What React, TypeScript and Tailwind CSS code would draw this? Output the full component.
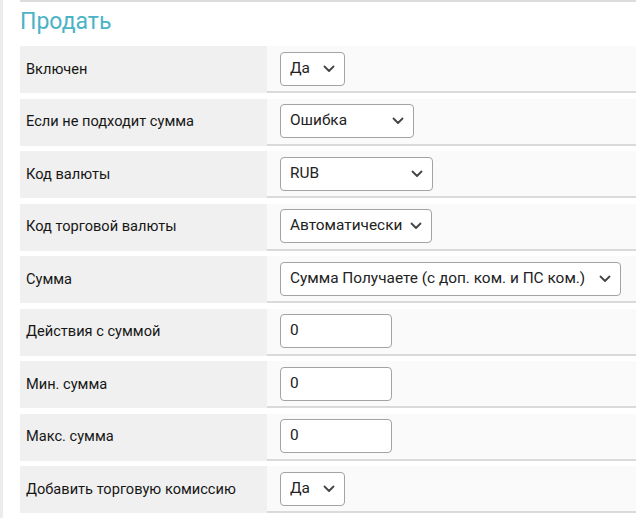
import { ReactNode } from "react";

type Field = {
  label: string;
  kind: "select" | "input";
  value: string;
  width: string;
};

const fields: Field[] = [
  { label: "Включен", kind: "select", value: "Да", width: "w-[65px]" },
  { label: "Если не подходит сумма", kind: "select", value: "Ошибка", width: "w-[134px]" },
  { label: "Код валюты", kind: "select", value: "RUB", width: "w-[153px]" },
  { label: "Код торговой валюты", kind: "select", value: "Автоматически", width: "w-[152px]" },
  { label: "Сумма", kind: "select", value: "Сумма Получаете (с доп. ком. и ПС ком.)", width: "w-[341px]" },
  { label: "Действия с суммой", kind: "input", value: "0", width: "w-[112px]" },
  { label: "Мин. сумма", kind: "input", value: "0", width: "w-[112px]" },
  { label: "Макс. сумма", kind: "input", value: "0", width: "w-[112px]" },
  { label: "Добавить торговую комиссию", kind: "select", value: "Да", width: "w-[65px]" },
];

function Chevron() {
  return (
    <svg width="12" height="8" viewBox="0 0 12 8" className="shrink-0">
      <path d="M1.5 1.5l4.5 4.5 4.5-4.5" fill="none" stroke="#444" strokeWidth="1.8" strokeLinecap="round" strokeLinejoin="round" />
    </svg>
  );
}

function Control({ field }: { field: Field }) {
  const box = `flex h-[34px] items-center rounded-[4px] border border-[#a3a3a3] bg-white pl-[9px] text-[15.4px] text-[#222] ${field.width}`;
  if (field.kind === "input") {
    return <div className={box}>{field.value}</div>;
  }
  return (
    <div className={`${box} justify-between pr-[9px]`}>
      <span className="whitespace-nowrap">{field.value}</span>
      <Chevron />
    </div>
  );
}

function Row({ label, children }: { label: string; children: ReactNode }) {
  return (
    <div className="flex h-[47px]">
      <div className="flex w-[247px] items-center bg-[#f0f0f0] pl-[6px] text-[14.6px] text-[#161616]">{label}</div>
      <div className="flex flex-1 items-center border-b-2 border-[#dadada] bg-[#fafafa] pl-[13px]">{children}</div>
    </div>
  );
}

export default function App() {
  return (
    <div className="h-[518px] w-[636px] overflow-hidden border-l-[3px] border-[#ececec] bg-white font-['Roboto',sans-serif]">
      <div className="ml-[17px] border-t-2 border-[#dcdcdc]">
        <h2 className="mb-[10px] pt-[6px] text-[23px] leading-[28px] font-normal text-[#4bb3c6]">Продать</h2>
        <div className="flex flex-col gap-[5.5px]">
          {fields.map((field) => (
            <Row key={field.label} label={field.label}>
              <Control field={field} />
            </Row>
          ))}
        </div>
      </div>
    </div>
  );
}
